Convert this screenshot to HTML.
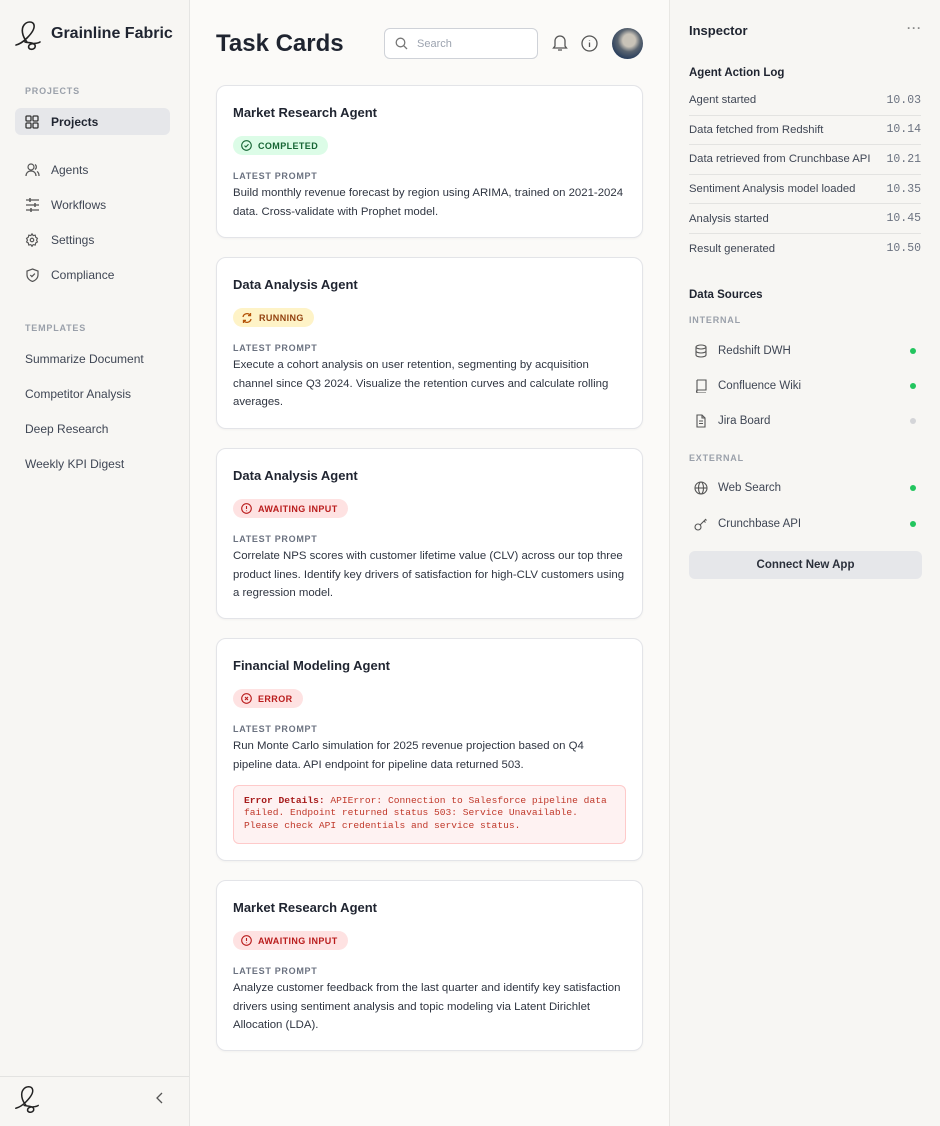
<!DOCTYPE html>
<html><head><meta charset="utf-8"><style>
*{box-sizing:border-box;margin:0;padding:0}
body{width:940px;height:1126px;position:relative;font-family:"Liberation Sans",sans-serif;color:#1f2430;background:#fbfaf8;overflow:hidden}
.a{position:absolute;white-space:nowrap}
#side{position:absolute;left:0;top:0;width:190px;height:1126px;background:#f7f6f3;border-right:1px solid #e5e5e3}
#right{position:absolute;left:669px;top:0;width:271px;height:1126px;background:#f7f6f3;border-left:1px solid #e8e7e4}
.lab{font-size:9px;font-weight:bold;letter-spacing:.8px;color:#9aa0aa}
.nav{font-size:12px;color:#3f4654}
.card{position:absolute;left:216px;width:427px;background:#fff;border:1px solid #e3e4e8;border-radius:10px;box-shadow:0 1px 2px rgba(0,0,0,.04)}
.card .t{position:absolute;left:16px;top:19px;font-size:13px;font-weight:bold;color:#1f2430}
.badge{position:absolute;left:16px;top:50px;height:19px;border-radius:10px;font-size:9px;font-weight:bold;letter-spacing:.4px;padding:0 10px 0 8px;display:flex;align-items:center;gap:6px}
.lp{position:absolute;left:16px;font-size:9px;font-weight:bold;letter-spacing:.7px;color:#6b7280}
.p{position:absolute;left:16px;font-size:11.4px;line-height:18.5px;color:#2f3541;white-space:nowrap}
.log{position:absolute;left:689px;width:232px;height:29.6px;font-size:11.3px;color:#3f4654;border-bottom:1px solid #e3e3e1;display:flex;justify-content:space-between;align-items:center}
.log span:last-child{font-family:"Liberation Mono",monospace;color:#6b7280;font-size:11.5px}
.ds{position:absolute;left:694px;width:228px;font-size:11.5px;color:#3f4654;display:flex;align-items:center}
.ds svg{margin-right:10px}
.dot{position:absolute;right:6px;width:6px;height:6px;border-radius:50%;background:#22c55e}
</style></head><body>
<div id="side">
<svg class="a" style="left:13px;top:16px" width="30" height="36" viewBox="0 0 30 36" fill="none" stroke="#222" stroke-width="1.6" stroke-linecap="round"><path d="M14 26c-5-6-6-13-3-17 3-4 9-4 10 0 1 4-3 9-7 13-4 4-7 6-11 7M12 26c3 1 8 0 10 3 1 3-2 5-5 4-2-1-2-4 1-5 3-1 6 0 9-2"/></svg>
<div class="a" style="left:51px;top:25px;font-size:16px;font-weight:bold;color:#1f2430">Grainline Fabric</div>
<div class="a lab" style="left:25px;top:86px">PROJECTS</div>
<div class="a" style="left:15px;top:108px;width:155px;height:27px;background:#e6e7ea;border-radius:6px"></div>
<svg class="a" style="left:25px;top:115px" width="14" height="14" viewBox="0 0 14 14" fill="none" stroke="#333" stroke-width="1.3"><rect x="1" y="1" width="5" height="5" rx="1"/><rect x="8" y="1" width="5" height="5" rx="1"/><rect x="1" y="8" width="5" height="5" rx="1"/><rect x="8" y="8" width="5" height="5" rx="1"/></svg>
<div class="a nav" style="left:51px;top:115px;font-weight:bold;color:#1f2430">Projects</div>
<svg class="a" style="left:25px;top:163px" width="15" height="14" viewBox="0 0 15 14" fill="none" stroke="#555" stroke-width="1.2"><circle cx="6" cy="4" r="3"/><path d="M1 13c0-3 2-5 5-5s5 2 5 5M10 1.5a3 3 0 010 5M12 8.5c1.5.8 2 2.5 2 4.5"/></svg>
<div class="a nav" style="left:51px;top:163px">Agents</div>
<svg class="a" style="left:25px;top:198px" width="15" height="14" viewBox="0 0 15 14" fill="none" stroke="#555" stroke-width="1.2"><path d="M1 2h13M1 7h13M1 12h13"/><path d="M5 0v4M10 5v4M6 10v4" stroke-width="1.5"/></svg>
<div class="a nav" style="left:51px;top:198px">Workflows</div>
<svg class="a" style="left:25px;top:233px" width="14" height="14" viewBox="0 0 24 24" fill="none" stroke="#555" stroke-width="2"><circle cx="12" cy="12" r="3"/><path d="M12 1.5l2 3 3.5-.8.8 3.5 3 2-1.5 3 1.5 3-3 2-.8 3.5-3.5-.8-2 3-2-3-3.5.8-.8-3.5-3-2 1.5-3-1.5-3 3-2 .8-3.5 3.5.8z"/></svg>
<div class="a nav" style="left:51px;top:233px">Settings</div>
<svg class="a" style="left:26px;top:268px" width="13" height="14" viewBox="0 0 13 14" fill="none" stroke="#555" stroke-width="1.2"><path d="M6.5 1L12 3v4c0 3-2.5 5.5-5.5 6.5C3.5 12.5 1 10 1 7V3z"/><path d="M4.3 7l1.6 1.6 3-3"/></svg>
<div class="a nav" style="left:51px;top:268px">Compliance</div>
<div class="a lab" style="left:25px;top:323px">TEMPLATES</div>
<div class="a nav" style="left:25px;top:352px">Summarize Document</div>
<div class="a nav" style="left:25px;top:387px">Competitor Analysis</div>
<div class="a nav" style="left:25px;top:422px">Deep Research</div>
<div class="a nav" style="left:25px;top:457px">Weekly KPI Digest</div>
<div class="a" style="left:0;top:1076px;width:189px;border-top:1px solid #e3e3e1"></div>
<svg class="a" style="left:13px;top:1081px" width="28" height="34" viewBox="0 0 30 36" fill="none" stroke="#222" stroke-width="1.6" stroke-linecap="round"><path d="M14 26c-5-6-6-13-3-17 3-4 9-4 10 0 1 4-3 9-7 13-4 4-7 6-11 7M12 26c3 1 8 0 10 3 1 3-2 5-5 4-2-1-2-4 1-5 3-1 6 0 9-2"/></svg>
<svg class="a" style="left:156px;top:1092px" width="8" height="12" viewBox="0 0 8 12" fill="none" stroke="#555" stroke-width="1.3"><path d="M6 1L1 6l5 5"/></svg>
</div>

<div class="a" style="left:216px;top:30px;font-size:24px;font-weight:bold;color:#1f2430">Task Cards</div>
<div class="a" style="left:384px;top:28px;width:154px;height:31px;border:1px solid #cfd2d8;border-radius:6px;background:#fff"></div>
<svg class="a" style="left:395px;top:37px" width="13" height="13" viewBox="0 0 13 13" fill="none" stroke="#777" stroke-width="1.3"><circle cx="5.5" cy="5.5" r="4.3"/><path d="M8.7 8.7L12 12"/></svg>
<div class="a" style="left:417px;top:38px;font-size:11px;color:#9ca3af">Search</div>
<svg class="a" style="left:552px;top:34px" width="16" height="18" viewBox="0 0 16 18" fill="none" stroke="#555" stroke-width="1.3"><path d="M3 12V7a5 5 0 0110 0v5l1.5 2h-13zM6 16h4"/></svg>
<svg class="a" style="left:581px;top:35px" width="17" height="17" viewBox="0 0 17 17" fill="none" stroke="#555" stroke-width="1.3"><circle cx="8.5" cy="8.5" r="7.5"/><path d="M8.5 7.5v4.5M8.5 5v.5"/></svg>
<div class="a" style="left:612px;top:28px;width:31px;height:31px;border-radius:50%;background:radial-gradient(circle at 55% 40%,#c9c3b8 0 25%,#5a6470 45%,#1e3558 80%)"></div>

<div class="card" style="top:85px;height:153px">
<div class="t">Market Research Agent</div>
<div class="badge" style="background:#dcfce7;color:#166534"><svg width="11" height="11" viewBox="0 0 11 11" fill="none" stroke="#166534" stroke-width="1.1"><circle cx="5.5" cy="5.5" r="4.8"/><path d="M3.5 5.6l1.4 1.4 2.6-2.7"/></svg>COMPLETED</div>
<div class="lp" style="top:85px">LATEST PROMPT</div>
<div class="p" style="top:98px">Build monthly revenue forecast by region using ARIMA, trained on 2021-2024<br>data. Cross-validate with Prophet model.</div>
</div>

<div class="card" style="top:257px;height:172px">
<div class="t">Data Analysis Agent</div>
<div class="badge" style="background:#fef3c7;color:#92400e"><svg width="12" height="12" viewBox="0 0 12 12" fill="none" stroke="#b45309" stroke-width="1.3"><path d="M2 5a4 4 0 017.3-1.5M10 7a4 4 0 01-7.3 1.5"/><path d="M9.5 1v2.6H7M2.5 11V8.4H5"/></svg>RUNNING</div>
<div class="lp" style="top:85px">LATEST PROMPT</div>
<div class="p" style="top:98px">Execute a cohort analysis on user retention, segmenting by acquisition<br>channel since Q3 2024. Visualize the retention curves and calculate rolling<br>averages.</div>
</div>

<div class="card" style="top:448px;height:171px">
<div class="t">Data Analysis Agent</div>
<div class="badge" style="background:#fee2e2;color:#b91c1c"><svg width="11" height="11" viewBox="0 0 11 11" fill="none" stroke="#b91c1c" stroke-width="1.1"><circle cx="5.5" cy="5.5" r="4.8"/><path d="M5.5 3v3M5.5 7.5v.6"/></svg>AWAITING INPUT</div>
<div class="lp" style="top:85px">LATEST PROMPT</div>
<div class="p" style="top:98px">Correlate NPS scores with customer lifetime value (CLV) across our top three<br>product lines. Identify key drivers of satisfaction for high-CLV customers using<br>a regression model.</div>
</div>

<div class="card" style="top:638px;height:223px">
<div class="t">Financial Modeling Agent</div>
<div class="badge" style="background:#fee2e2;color:#b91c1c"><svg width="11" height="11" viewBox="0 0 11 11" fill="none" stroke="#b91c1c" stroke-width="1.1"><circle cx="5.5" cy="5.5" r="4.8"/><path d="M4 4l3 3M7 4l-3 3"/></svg>ERROR</div>
<div class="lp" style="top:85px">LATEST PROMPT</div>
<div class="p" style="top:98px">Run Monte Carlo simulation for 2025 revenue projection based on Q4<br>pipeline data. API endpoint for pipeline data returned 503.</div>
<div class="a" style="left:16px;top:146px;width:393px;height:59px;background:#fef2f2;border:1px solid #fecaca;border-radius:6px;font-family:'Liberation Mono',monospace;font-size:9.6px;line-height:12.3px;color:#c0392b;padding:9px 0 0 10px">
<b style="color:#a61b1b">Error Details:</b> APIError: Connection to Salesforce pipeline data<br>failed. Endpoint returned status 503: Service Unavailable.<br>Please check API credentials and service status.</div>
</div>

<div class="card" style="top:880px;height:171px">
<div class="t">Market Research Agent</div>
<div class="badge" style="background:#fee2e2;color:#b91c1c"><svg width="11" height="11" viewBox="0 0 11 11" fill="none" stroke="#b91c1c" stroke-width="1.1"><circle cx="5.5" cy="5.5" r="4.8"/><path d="M5.5 3v3M5.5 7.5v.6"/></svg>AWAITING INPUT</div>
<div class="lp" style="top:85px">LATEST PROMPT</div>
<div class="p" style="top:98px">Analyze customer feedback from the last quarter and identify key satisfaction<br>drivers using sentiment analysis and topic modeling via Latent Dirichlet<br>Allocation (LDA).</div>
</div>

<div id="right"></div>
<div class="a" style="left:689px;top:23px;font-size:13px;font-weight:bold">Inspector</div>
<div class="a" style="left:907px;top:21px;font-size:12px;color:#888;letter-spacing:1px;font-weight:bold">···</div>
<div class="a" style="left:689px;top:67px;font-size:11.5px;font-weight:bold">Agent Action Log</div>
<div class="log" style="top:86px"><span>Agent started</span><span>10.03</span></div>
<div class="log" style="top:115.6px"><span>Data fetched from Redshift</span><span>10.14</span></div>
<div class="log" style="top:145.2px"><span>Data retrieved from Crunchbase API</span><span>10.21</span></div>
<div class="log" style="top:174.8px"><span>Sentiment Analysis model loaded</span><span>10.35</span></div>
<div class="log" style="top:204.4px"><span>Analysis started</span><span>10.45</span></div>
<div class="log" style="top:234px;border-bottom:none"><span>Result generated</span><span>10.50</span></div>
<div class="a" style="left:689px;top:289px;font-size:11.5px;font-weight:bold">Data Sources</div>
<div class="a lab" style="left:689px;top:315px">INTERNAL</div>
<div class="ds" style="top:343px;height:16px"><svg width="14" height="14" viewBox="0 0 14 14" fill="none" stroke="#555" stroke-width="1.1"><ellipse cx="7" cy="3" rx="5" ry="2"/><path d="M2 3v8c0 1 2 2 5 2s5-1 5-2V3M2 7c0 1 2 2 5 2s5-1 5-2"/></svg>Redshift DWH<span class="dot"></span></div>
<div class="ds" style="top:378px;height:16px"><svg width="14" height="14" viewBox="0 0 14 14" fill="none" stroke="#555" stroke-width="1.1"><path d="M3 1h9v10H4a1.5 1.5 0 000 3h8M3 1v11.5"/></svg>Confluence Wiki<span class="dot"></span></div>
<div class="ds" style="top:413px;height:16px"><svg width="14" height="14" viewBox="0 0 14 14" fill="none" stroke="#555" stroke-width="1.1"><path d="M3 1h5l3 3v9H3zM8 1v3h3M5 7h4M5 9.5h4"/></svg>Jira Board<span class="dot" style="background:#d4d5d8"></span></div>
<div class="a lab" style="left:689px;top:453px">EXTERNAL</div>
<div class="ds" style="top:480px;height:16px"><svg width="14" height="14" viewBox="0 0 14 14" fill="none" stroke="#555" stroke-width="1.1"><circle cx="7" cy="7" r="6"/><ellipse cx="7" cy="7" rx="2.5" ry="6"/><path d="M1 7h12"/></svg>Web Search<span class="dot"></span></div>
<div class="ds" style="top:516px;height:16px"><svg width="14" height="14" viewBox="0 0 14 14" fill="none" stroke="#555" stroke-width="1.1"><circle cx="4" cy="10" r="3"/><path d="M6 8l6-6M10 4l1.5 1.5M11.5 2.5l1 1"/></svg>Crunchbase API<span class="dot"></span></div>
<div class="a" style="left:689px;top:551px;width:233px;height:28px;background:#e6e7ea;border-radius:6px;font-size:11.5px;font-weight:bold;color:#2b303b;text-align:center;line-height:28px">Connect New App</div>
</body></html>
